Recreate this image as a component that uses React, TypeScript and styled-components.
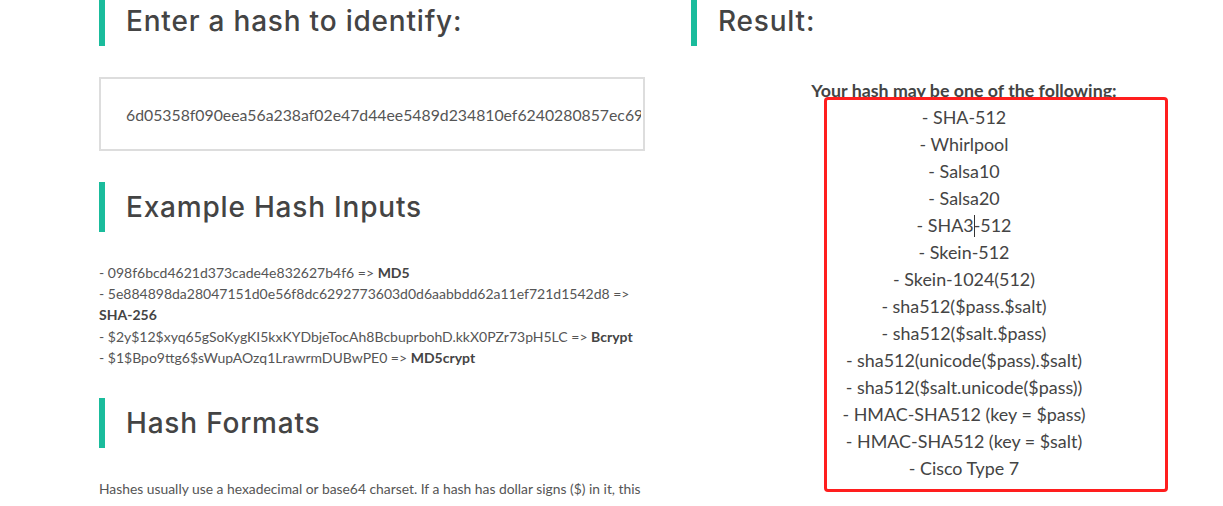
import React from "react";
import styled, { createGlobalStyle } from "styled-components";

const GlobalStyle = createGlobalStyle`
  html, body { margin: 0; padding: 0; background: #fff; }
  body { font-family: "Lato", "Liberation Sans", sans-serif; color: #555; overflow: hidden; }
  * { box-sizing: border-box; }
`;

const Page = styled.div`
  position: relative;
  width: 1223px;
  height: 506px;
  overflow: hidden;
`;

const Container = styled.div`
  display: grid;
  grid-template-columns: 546px 546px;
  column-gap: 46px;
  padding-left: 99px;
  margin-top: -4px;
  width: 1300px;
`;

const Column = styled.section`
  position: relative;
  display: flex;
  flex-direction: column;
`;

const Heading = styled.h2`
  margin: 0;
  height: 50px;
  border-left: 6px solid #1abc9c;
  padding-left: 21px;
  display: flex;
  align-items: center;
  font-family: "Inter", "Open Sans", sans-serif;
  font-weight: 500;
  font-size: 28px;
  letter-spacing: 0.8px;
  color: #444;
`;

const HashInput = styled.input`
  margin-top: 31px;
  width: 546px;
  height: 74px;
  border: 2px solid #ddd;
  padding: 0 2px 0 25px;
  font-family: "Lato", sans-serif;
  font-size: 15.8px;
  color: #555;
  outline: none;
  background: #fff;
`;

const Section = styled.div<{ $gap?: number }>`
  margin-top: ${(p) => p.$gap ?? 31}px;
`;

const Examples = styled.div`
  margin-top: 30px;
  font-size: 14px;
  line-height: 21.2px;
  color: #555;
`;

const Strong = styled.strong`
  font-weight: 700;
  color: #444;
  white-space: nowrap;
`;

const Paragraph = styled.p`
  margin: 30px 0 0;
  font-size: 13.85px;
  line-height: 22px;
  color: #555;
`;

const ResultBody = styled.div`
  margin-top: 31px;
  display: flex;
  flex-direction: column;
  align-items: center;
  text-align: center;
  line-height: 27px;
`;

const ResultTitle = styled.div`
  font-weight: 700;
  font-size: 17.8px;
  color: #444;
`;

const ResultItem = styled.div`
  font-size: 17.9px;
  color: #444;
`;

const Caret = styled.span`
  display: inline-block;
  width: 1px;
  height: 22px;
  margin-right: -1px;
  background: #333;
  vertical-align: -5px;
`;

const Annotation = styled.div`
  position: absolute;
  left: 133px;
  top: 101px;
  width: 344px;
  height: 395px;
  border: 3px solid #ff1e1e;
  border-radius: 4px;
  pointer-events: none;
`;

const hash =
  "6d05358f090eea56a238af02e47d44ee5489d234810ef6240280857ec69712a3e5e370b8a41899d0196ade16c0d54327c5654019292cbfe0b5e98ad1fec71bed";

const results: React.ReactNode[] = [
  "- SHA-512",
  "- Whirlpool",
  "- Salsa10",
  "- Salsa20",
  <>
    - SHA3<Caret />-512
  </>,
  "- Skein-512",
  "- Skein-1024(512)",
  "- sha512($pass.$salt)",
  "- sha512($salt.$pass)",
  "- sha512(unicode($pass).$salt)",
  "- sha512($salt.unicode($pass))",
  "- HMAC-SHA512 (key = $pass)",
  "- HMAC-SHA512 (key = $salt)",
  "- Cisco Type 7",
];

export default function App() {
  return (
    <Page>
      <GlobalStyle />
      <Container>
        <Column>
          <Heading>Enter a hash to identify:</Heading>
          <HashInput readOnly value={hash} />
          <Section>
            <Heading>Example Hash Inputs</Heading>
          </Section>
          <Examples>
            <div>
              - 098f6bcd4621d373cade4e832627b4f6 =&gt; <Strong>MD5</Strong>
            </div>
            <div>
              - 5e884898da28047151d0e56f8dc6292773603d0d6aabbdd62a11ef721d1542d8 =&gt;{" "}
              <Strong>SHA-256</Strong>
            </div>
            <div>
              - $2y$12$xyq65gSoKygKI5kxKYDbjeTocAh8BcbuprbohD.kkX0PZr73pH5LC =&gt;{" "}
              <Strong>Bcrypt</Strong>
            </div>
            <div>
              - $1$Bpo9ttg6$sWupAOzq1LrawrmDUBwPE0 =&gt; <Strong>MD5crypt</Strong>
            </div>
          </Examples>
          <Section $gap={30}>
            <Heading>Hash Formats</Heading>
          </Section>
          <Paragraph>
            Hashes usually use a hexadecimal or base64 charset. If a hash has dollar signs ($) in it, this
            is usually a delimiter between the salt and the hash.
          </Paragraph>
        </Column>
        <Column>
          <Heading>Result:</Heading>
          <ResultBody>
            <ResultTitle>Your hash may be one of the following:</ResultTitle>
            {results.map((r, i) => (
              <ResultItem key={i}>{r}</ResultItem>
            ))}
          </ResultBody>
          <Annotation />
        </Column>
      </Container>
    </Page>
  );
}
